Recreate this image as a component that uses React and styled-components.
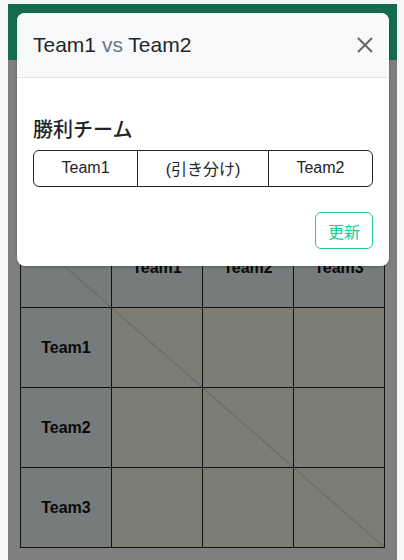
import React from 'react';
import styled, { createGlobalStyle } from 'styled-components';

const GlobalStyle = createGlobalStyle`
    html, body {
        margin: 0;
        padding: 0;
        background: #f7f7f8;
        font-family: "Liberation Sans", Arial, "Noto Sans CJK JP", sans-serif;
        color: #212529;
    }
`;

const Frame = styled.div`
    position: relative;
    margin: 4px 7px 0 8px;
    height: 556px;
    overflow: hidden;
    display: flex;
    flex-direction: column;
`;

const NavBar = styled.header`
    height: 56px;
    flex: none;
    background: #146b4f;
`;

const Content = styled.main`
    flex: 1;
    background: #7f7f7f;
    padding: 167px 12px 0 12px;
`;

const Matrix = styled.table`
    width: 365px;
    table-layout: fixed;
    border-collapse: collapse;
    border: 1px solid #111;
`;

const diagonal = `
    linear-gradient(
        to top right,
        transparent calc(50% - 1px),
        #5d6363 50%,
        transparent calc(50% + 1px)
    )
`;

const HeadCell = styled.th`
    height: 79px;
    border: 1px solid #111;
    background: ${({ $diag }) => ($diag ? `${diagonal}, #777b7b` : '#777b7b')};
    font-size: 16px;
    font-weight: 700;
    color: #0a0a0a;
    text-align: center;
    vertical-align: middle;
    padding: 0;
`;

const Cell = styled.td`
    height: 79px;
    border: 1px solid #111;
    background: ${({ $diag }) => ($diag ? `${diagonal}, #7e7d75` : '#7e7d75')};
    padding: 0;
`;

const Dialog = styled.div`
    position: absolute;
    top: 9px;
    left: 9px;
    width: 372px;
    background: #fff;
    border-radius: 8px;
    overflow: hidden;
    box-shadow: 0 1px 3px rgba(0, 0, 0, 0.25);
`;

const DialogHeader = styled.div`
    display: flex;
    align-items: center;
    justify-content: space-between;
    height: 64px;
    padding: 0 16px;
    background: #f8f9fa;
    border-bottom: 1px solid #dee2e6;
`;

const Title = styled.h5`
    margin: 0;
    font-size: 21px;
    font-weight: 400;
    line-height: 1.5;
    color: #212529;
`;

const Versus = styled.span`
    color: #6c757d;
`;

const CloseButton = styled.button`
    width: 24px;
    height: 24px;
    padding: 0;
    margin-right: -4px;
    border: none;
    background: transparent;
    display: flex;
    align-items: center;
    justify-content: center;
    cursor: pointer;
`;

const DialogBody = styled.div`
    padding: 40px 16px 13px;
`;

const Label = styled.div`
    font-size: 20px;
    font-weight: 500;
    line-height: 24px;
    margin-bottom: 8px;
    font-family: "Liberation Sans", "Noto Sans CJK JP", sans-serif;
`;

const ButtonGroup = styled.div`
    display: flex;
    width: 100%;
`;

const ChoiceButton = styled.button`
    flex: 1 1 auto;
    height: 37px;
    padding: 0 12px 1px;
    font: inherit;
    font-size: 16px;
    color: #212529;
    background: #fff;
    border: 1px solid #212529;
    border-radius: 0;
    margin-left: -1px;
    white-space: nowrap;

    &:first-child {
        margin-left: 0;
        border-radius: 6px 0 0 6px;
    }

    &:last-child {
        border-radius: 0 6px 6px 0;
    }
`;

const DialogFooter = styled.div`
    display: flex;
    justify-content: flex-end;
    padding: 12px 16px 17px;
`;

const UpdateButton = styled.button`
    height: 37px;
    padding: 0 12px;
    font: inherit;
    font-size: 16px;
    color: #20c997;
    background: #fff;
    border: 1px solid #20c997;
    border-radius: 6px;
`;

const teams = ['Team1', 'Team2', 'Team3'];

const CloseIcon = () => (
    <svg width="16" height="16" viewBox="0 0 16 16">
        <path d="M1 1 L15 15 M15 1 L1 15" stroke="#666" strokeWidth="2" />
    </svg>
);

export default function App() {
    return (
        <>
            <GlobalStyle />
            <Frame>
                <NavBar />
                <Content>
                    <Matrix>
                        <thead>
                            <tr>
                                <HeadCell $diag />
                                {teams.map((t) => (
                                    <HeadCell key={t}>{t}</HeadCell>
                                ))}
                            </tr>
                        </thead>
                        <tbody>
                            {teams.map((row, i) => (
                                <tr key={row}>
                                    <HeadCell>{row}</HeadCell>
                                    {teams.map((col, j) => (
                                        <Cell key={col} $diag={i === j} />
                                    ))}
                                </tr>
                            ))}
                        </tbody>
                    </Matrix>
                </Content>

                <Dialog>
                    <DialogHeader>
                        <Title>
                            Team1 <Versus>vs</Versus> Team2
                        </Title>
                        <CloseButton aria-label="close">
                            <CloseIcon />
                        </CloseButton>
                    </DialogHeader>
                    <DialogBody>
                        <Label>勝利チーム</Label>
                        <ButtonGroup>
                            <ChoiceButton>Team1</ChoiceButton>
                            <ChoiceButton>(引き分け)</ChoiceButton>
                            <ChoiceButton>Team2</ChoiceButton>
                        </ButtonGroup>
                    </DialogBody>
                    <DialogFooter>
                        <UpdateButton>更新</UpdateButton>
                    </DialogFooter>
                </Dialog>
            </Frame>
        </>
    );
}
